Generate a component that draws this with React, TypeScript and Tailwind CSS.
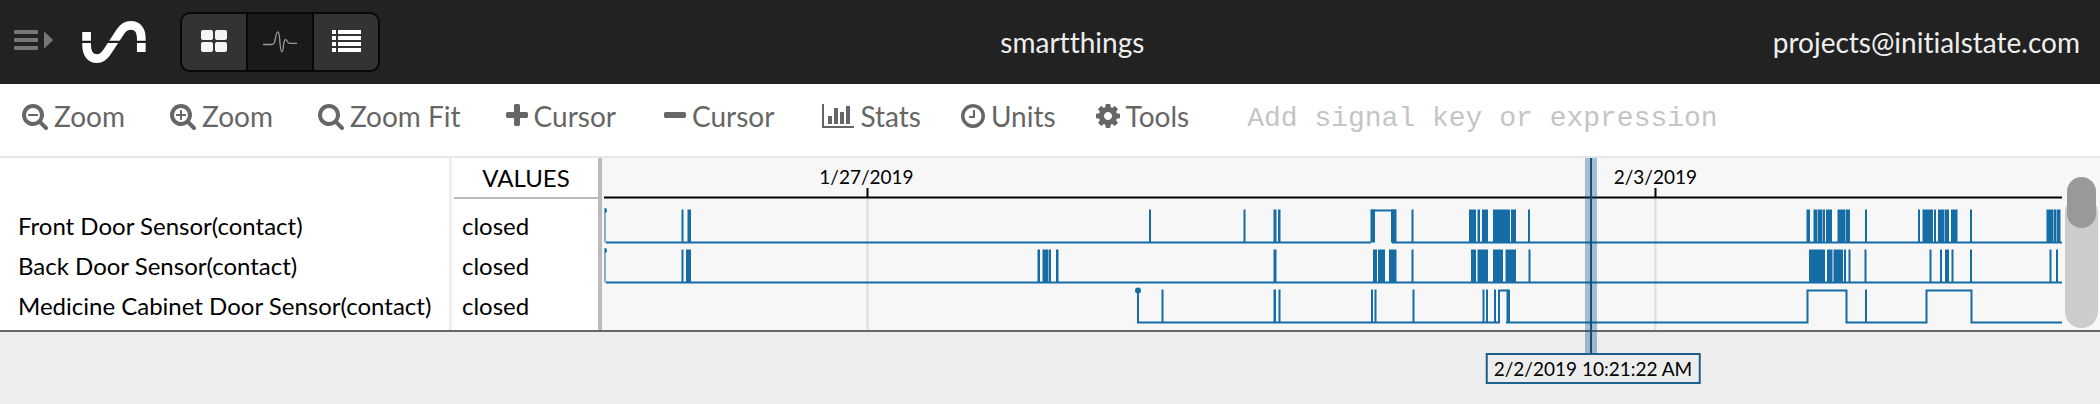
import type { ReactNode } from "react";

const ICONS = {
  zoomOut:
    "M1088 800v64q0 13-9.5 22.5t-22.5 9.5h-576q-13 0-22.5-9.5t-9.5-22.5v-64q0-13 9.5-22.5t22.5-9.5h576q13 0 22.5 9.5t9.5 22.5zm128 32q0-185-131.5-316.5t-316.5-131.5-316.5 131.5-131.5 316.5 131.5 316.5 316.5 131.5 316.5-131.5 131.5-316.5zm512 832q0 53-37.5 90.5t-90.5 37.5q-54 0-90-38l-343-342q-179 124-399 124-143 0-273.5-55.5t-225-150-150-225-55.5-273.5 55.5-273.5 150-225 225-150 273.5-55.5 273.5 55.5 225 150 150 225 55.5 273.5q0 220-124 399l343 343q37 37 37 90z",
  zoomIn:
    "M1088 800v64q0 13-9.5 22.5t-22.5 9.5h-224v224q0 13-9.5 22.5t-22.5 9.5h-64q-13 0-22.5-9.5t-9.5-22.5v-224h-224q-13 0-22.5-9.5t-9.5-22.5v-64q0-13 9.5-22.5t22.5-9.5h224v-224q0-13 9.5-22.5t22.5-9.5h64q13 0 22.5 9.5t9.5 22.5v224h224q13 0 22.5 9.5t9.5 22.5zm128 32q0-185-131.5-316.5t-316.5-131.5-316.5 131.5-131.5 316.5 131.5 316.5 316.5 131.5 316.5-131.5 131.5-316.5zm512 832q0 53-37.5 90.5t-90.5 37.5q-54 0-90-38l-343-342q-179 124-399 124-143 0-273.5-55.5t-225-150-150-225-55.5-273.5 55.5-273.5 150-225 225-150 273.5-55.5 273.5 55.5 225 150 150 225 55.5 273.5q0 220-124 399l343 343q37 37 37 90z",
  search:
    "M1216 832q0-185-131.5-316.5t-316.5-131.5-316.5 131.5-131.5 316.5 131.5 316.5 316.5 131.5 316.5-131.5 131.5-316.5zm512 832q0 52-38 90t-90 38q-54 0-90-38l-343-342q-179 124-399 124-143 0-273.5-55.5t-225-150-150-225-55.5-273.5 55.5-273.5 150-225 225-150 273.5-55.5 273.5 55.5 225 150 150 225 55.5 273.5q0 220-124 399l343 343q37 37 37 90z",
  plus: "M1600 736v192q0 40-28 68t-68 28h-416v416q0 40-28 68t-68 28h-192q-40 0-68-28t-28-68v-416h-416q-40 0-68-28t-28-68v-192q0-40 28-68t68-28h416v-416q0-40 28-68t68-28h192q40 0 68 28t28 68v416h416q40 0 68 28t28 68z",
  minus:
    "M1600 736v192q0 40-28 68t-68 28h-1216q-40 0-68-28t-28-68v-192q0-40 28-68t68-28h1216q40 0 68 28t28 68z",
  chart:
    "M640 896v512h-256v-512h256zm384-512v1024h-256v-1024h256zm1024 1152v128h-2048v-1536h128v1408h1920zm-640-896v768h-256v-768h256zm384-384v1152h-256v-1152h256z",
  clock:
    "M1024 544v448q0 14-9 23t-23 9h-320q-14 0-23-9t-9-23v-64q0-14 9-23t23-9h224v-352q0-14 9-23t23-9h64q14 0 23 9t9 23zm416 352q0-148-73-273t-198-198-273-73-273 73-198 198-73 273 73 273 198 198 273 73 273-73 198-198 73-273zm224 0q0 209-103 385.5t-279.5 279.5-385.5 103-385.5-103-279.5-279.5-103-385.5 103-385.5 279.5-279.5 385.5-103 385.5 103 279.5 279.5 103 385.5z",
  cog: "M1152 896q0-106-75-181t-181-75-181 75-75 181 75 181 181 75 181-75 75-181zm512-109v222q0 12-8 23t-20 13l-185 28q-19 54-39 91 35 50 107 138 10 12 10 25t-9 23q-27 37-99 108t-94 71q-12 0-26-9l-138-108q-44 23-91 38-16 136-29 186-7 28-36 28h-222q-14 0-24.5-8.5t-11.5-21.5l-28-184q-49-16-90-37l-141 107q-10 9-25 9-14 0-25-11-126-114-165-168-7-10-7-23 0-12 8-23 15-21 51-66.5t54-70.5q-27-50-41-99l-183-27q-13-2-21-12.5t-8-23.5v-222q0-12 8-23t19-13l186-28q14-46 39-92-40-57-107-138-10-12-10-24 0-10 9-23 26-36 98.5-107.5t94.5-71.5q13 0 26 10l138 107q44-23 91-38 16-136 29-186 7-28 36-28h222q14 0 24.5 8.5t11.5 21.5l28 184q49 16 90 37l142-107q9-9 24-9 13 0 25 10 129 119 165 170 7 8 7 22 0 12-8 23-15 21-51 66.5t-54 70.5q26 50 41 98l183 28q13 2 21 12.5t8 23.5z",
};

type Tool = { label: string; path: string; box: string; size: string };

// box crops each glyph to its inked width, in 1792-unit font space
const ZOOM_TOOLS: Tool[] = [
  { label: "Zoom", path: ICONS.zoomOut, box: "64 0 1664 1792", size: "w-[26px]" },
  { label: "Zoom", path: ICONS.zoomIn, box: "64 0 1664 1792", size: "w-[26px]" },
  { label: "Zoom Fit", path: ICONS.search, box: "64 0 1664 1792", size: "w-[26px]" },
];

const CURSOR_TOOLS: Tool[] = [
  { label: "Cursor", path: ICONS.plus, box: "192 0 1408 1792", size: "w-[22px]" },
  { label: "Cursor", path: ICONS.minus, box: "192 0 1408 1792", size: "w-[22px]" },
];

const MORE_TOOLS: Tool[] = [
  { label: "Stats", path: ICONS.chart, box: "0 0 2048 1792", size: "w-[32px]" },
  { label: "Units", path: ICONS.clock, box: "128 0 1536 1792", size: "w-[24px]" },
  { label: "Tools", path: ICONS.cog, box: "128 0 1536 1792", size: "w-[24px]" },
];

// Each burst is [start, end] on the timeline; wide pulses are drawn by `line`.
const SIGNALS: {
  name: string;
  value: string;
  bursts: [number, number][];
  line: string;
}[] = [
  {
    name: "Front Door Sensor(contact)",
    value: "closed",
    bursts: [
      [79.5, 81.5], [85.5, 89], [547, 549], [641.5, 643.5], [671.5, 674.5], [676, 678.5],
      [768.5, 773], [789, 794.5], [809.5, 811.5], [867, 874], [875.5, 878], [880, 886],
      [891, 908], [909, 914], [926, 928], [1204.5, 1208], [1211.5, 1215], [1215.5, 1220.5],
      [1221, 1223], [1224, 1230], [1235.5, 1243], [1243.5, 1248], [1263, 1265],
      [1316, 1318], [1320.5, 1331], [1332, 1334], [1336, 1342], [1342.5, 1347],
      [1349, 1355.5], [1368, 1370], [1444.5, 1451], [1451.5, 1454], [1454.5, 1458.5],
    ],
    line: "M4 34.5H769M769 2.5H794M790 34.5H1460",
  },
  {
    name: "Back Door Sensor(contact)",
    value: "closed",
    bursts: [
      [79.5, 81.5], [84, 89], [435.5, 438], [440.5, 446], [446.5, 449], [454, 456.5],
      [671.5, 674.5], [771, 775], [776, 783], [787, 794.5], [809.5, 811.5], [869, 874],
      [875.5, 886], [891, 901], [903.5, 914], [926.5, 928.5], [1207, 1223], [1225, 1230.5],
      [1231.5, 1241], [1242, 1244], [1246.5, 1248.5], [1262.5, 1264.5], [1327.5, 1329.5],
      [1338, 1340], [1343, 1347], [1349.5, 1351.5], [1368, 1370], [1447.5, 1449.5],
      [1454, 1456],
    ],
    line: "M4 34.5H1460",
  },
  {
    name: "Medicine Cabinet Door Sensor(contact)",
    value: "closed",
    bursts: [
      [559.5, 561.5], [671.5, 674], [676.5, 678.5], [769, 771], [772.5, 774.5],
      [810.5, 812.5], [880.5, 882.5], [884, 886], [892, 894], [904.5, 908], [1263, 1265],
    ],
    line: "M536 2V34.5H897V2.5H906M904 34.5H1205.5V2.5H1244.5V34.5H1324.5V2.5H1369.5V34.5H1460",
  },
];

function Logo() {
  return (
    <svg viewBox="0 0 64 42" className="ml-7 h-[42px] w-16" aria-hidden="true">
      <path
        d="M4.6 11V24C4.6 32.5 8.5 37.6 15 37.6C19.5 37.6 22 35.6 24.8 31.4L38.6 10.4C41.4 6.2 44.2 4.4 48.8 4.4C55.5 4.4 59.3 9.4 59.3 17V31"
        fill="none"
        stroke="#fff"
        strokeWidth="8.7"
      />
      <path d="M0 19.8H64V22H0z" fill="#222" />
    </svg>
  );
}

function ViewButton({ label, active, children }: { label: string; active?: boolean; children: ReactNode }) {
  return (
    <button
      aria-label={label}
      className={`flex flex-1 items-center justify-center ${active ? "bg-[#1a1a1a]" : "bg-[#333]"}`}
    >
      {children}
    </button>
  );
}

function Header() {
  return (
    <header className="flex h-[84px] items-center bg-[#222] pr-5 text-[28px] text-[#eee]">
      <button aria-label="Menu" className="ml-3.5 pb-1">
        <svg viewBox="0 0 40 20" className="h-5 w-10" fill="#777">
          <rect width="24" height="4" rx="1" />
          <rect y="8" width="24" height="4" rx="1" />
          <rect y="16" width="24" height="4" rx="1" />
          <path d="M30 2.5Q30 1.6 31 2.2L38.5 9.3Q39 10 38.5 10.7L31 17.8Q30 18.4 30 17.5z" />
        </svg>
      </button>
      <Logo />
      <div className="ml-[34px] flex h-[60px] w-[200px] gap-0.5 overflow-hidden rounded-[10px] border-2 border-[#080808] bg-[#080808]">
        <ViewButton label="Tiles">
          <svg viewBox="0 0 26 22" className="mb-0.5 h-[22px] w-[26px]" fill="#f5f5f5">
            <rect width="12" height="10" rx="2" />
            <rect x="14" width="12" height="10" rx="2" />
            <rect y="12" width="12" height="10" rx="2" />
            <rect x="14" y="12" width="12" height="10" rx="2" />
          </svg>
        </ViewButton>
        <ViewButton label="Waves" active>
          <svg viewBox="0 0 34 24" className="h-6 w-[34px]" fill="none" stroke="#999" strokeWidth="1.3">
            <path d="M0 14.5H8.5C11 14.5 11.5 13 12.3 9C13 5 13.5 1.8 14.8 1.8C16.5 1.8 16.5 8 17 13C17.4 18 17.8 21.8 18.8 21.8C20.2 21.8 20.2 18 20.7 14C21.1 11 21.5 9.6 22.6 9.6C24.2 9.6 24.2 13.3 26.5 13.3H34" />
          </svg>
        </ViewButton>
        <ViewButton label="Lines">
          <svg viewBox="0 0 29 22" className="mb-0.5 h-[22px] w-[29px]" fill="#fff">
            {[0, 6, 12, 18].map((y) => (
              <g key={y}>
                <rect y={y} width="4" height="4" />
                <rect x="6" y={y} width="23" height="4" />
              </g>
            ))}
          </svg>
        </ViewButton>
      </div>
      <h1 className="flex-1 text-center">smartthings</h1>
      <a href="#account" className="pl-2">
        projects@initialstate.com
      </a>
    </header>
  );
}

function ToolButtons({ tools }: { tools: Tool[] }) {
  return (
    <>
      {tools.map((tool, i) => (
        <button key={i} className="flex items-center gap-1.5 whitespace-nowrap">
          <svg viewBox={tool.box} className={`h-7 ${tool.size}`} fill="currentColor">
            <path d={tool.path} />
          </svg>
          {tool.label}
        </button>
      ))}
    </>
  );
}

function Toolbar() {
  return (
    <nav className="flex h-[72px] items-center bg-white px-[22px] pb-2 text-[28px] text-[#666]">
      <div className="flex gap-[45px]">
        <ToolButtons tools={ZOOM_TOOLS} />
      </div>
      <div className="mr-12 ml-[45px] flex gap-12">
        <ToolButtons tools={CURSOR_TOOLS} />
      </div>
      <div className="flex gap-10">
        <ToolButtons tools={MORE_TOOLS} />
      </div>
      <input
        aria-label="Signal"
        placeholder="Add signal key or expression"
        className="ml-[58px] min-w-0 flex-1 pt-1.5 font-['Liberation_Mono',monospace] outline-none placeholder:text-[#c4c4c4]"
      />
    </nav>
  );
}

function SignalTable() {
  return (
    <table className="shrink-0 border-separate border-spacing-0 bg-white text-2xl text-black">
      <thead>
        <tr>
          <td className="w-[452px] border-r-[3px] border-[#eee]" />
          <th className="h-12 w-[150px] border-r-4 border-[#bbb] p-0 pl-0.5 align-top font-normal">
            <div className="h-[41px] border-b-2 border-[#bbb] pt-0.5 leading-9">VALUES</div>
          </th>
        </tr>
      </thead>
      <tbody>
        {SIGNALS.map((s) => (
          <tr key={s.name} className="group">
            <td className="h-10 border-r-[3px] border-[#eee] p-0 pl-[18px] align-top leading-10 group-last:h-11">
              {s.name}
            </td>
            <td className="border-r-4 border-[#bbb] p-0 pl-2.5 align-top leading-10">{s.value}</td>
          </tr>
        ))}
      </tbody>
    </table>
  );
}

function Timeline() {
  return (
    <div className="relative min-w-0 flex-1 text-[19px] leading-7 text-black">
      <svg viewBox="0 0 1461 172" preserveAspectRatio="none" className="block h-[172px] w-full">
        <path d="M265.5 40V172M1053.5 40V172" stroke="#ddd" strokeWidth="2" />
        <path d="M2 39.5H1460M265.5 30V39M1053.5 30V39" stroke="#000" strokeWidth="2" />
        {SIGNALS.map((s, row) => (
          <g key={s.name} transform={`translate(0 ${50 + row * 40})`} fill="#166ca5" stroke="none">
            {s.bursts.map(([start, end]) => (
              <rect key={start} x={start} y="1.5" width={end - start} height="33" />
            ))}
            <path d={s.line} fill="none" stroke="#166ca5" strokeWidth="2" />
            {row < 2 ? (
              <path d="M2.5 0V34.5H3.5V5Q5 4.5 5 2.5T3.5 0z" />
            ) : (
              <circle cx="536" cy="2.5" r="3" />
            )}
          </g>
        ))}
      </svg>
      <span className="absolute top-[5px] left-[18.1%] -translate-x-1/2">1/27/2019</span>
      <span className="absolute top-[5px] left-[72.1%] -translate-x-1/2">2/3/2019</span>
      <div className="absolute top-0 left-[67.66%] flex h-[195px] w-3 -translate-x-1/2 justify-center bg-[#0c5180]/35">
        <div className="w-0.5 bg-[#0c5180]" />
      </div>
      <time className="absolute top-[195px] left-[67.83%] -translate-x-1/2 border-2 border-[#1b5f8a] px-1.5 leading-[27px] whitespace-nowrap">
        2/2/2019 10:21:22 AM
      </time>
    </div>
  );
}

export default function App() {
  return (
    <div className="min-h-screen bg-[#ededed] font-['Lato',sans-serif] [font-variant-ligatures:none]">
      <Header />
      <Toolbar />
      <main className="flex border-t-2 border-b-2 border-t-[#e5e7ea] border-b-[#666] bg-[#f7f7f7]">
        <SignalTable />
        <Timeline />
        <div className="flex w-[37px] shrink-0 flex-col items-center pt-[19px] pb-0.5">
          <div className="z-10 h-[51px] w-[29px] rounded-full bg-[#999]" />
          <div className="-mt-8 w-[33px] flex-1 rounded-full bg-[#ccc]" />
        </div>
      </main>
    </div>
  );
}
